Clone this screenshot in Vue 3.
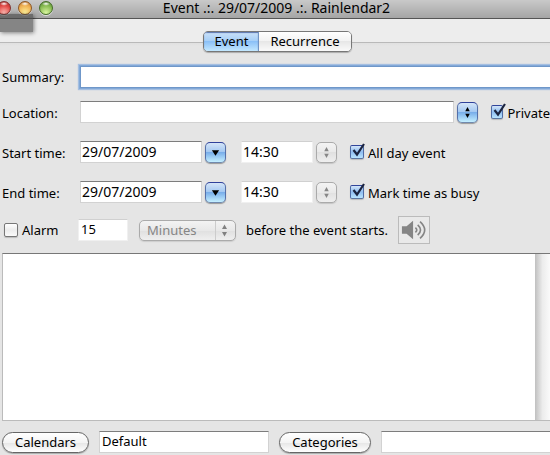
<script setup>
import { ref } from 'vue'

const tab = ref('Event')
const summary = ref('')
const location = ref('')
const isPrivate = ref(true)
const times = ref([
  { id: 'start', label: 'Start time:', date: '29/07/2009', time: '14:30', option: 'All day event', checked: true },
  { id: 'end', label: 'End time:', date: '29/07/2009', time: '14:30', option: 'Mark time as busy', checked: true }
])
const alarm = ref(false)
const alarmValue = ref('15')
const unit = ref('Minutes')
const notes = ref('')
const calendars = ref('Default')
const categories = ref('')
</script>

<template>
  <main class="window">
    <header class="titlebar">
      <div class="lights">
        <button class="light red" aria-label="Close"></button>
        <button class="light amber" aria-label="Minimize"></button>
        <button class="light green" aria-label="Zoom"></button>
      </div>
      <h1>Event .:. 29/07/2009 .:. Rainlendar2</h1>
    </header>
    <div class="shade"></div>

    <nav class="tabs">
      <div class="segments">
        <button v-for="name in ['Event', 'Recurrence']" :key="name" :class="{ active: tab === name }" @click="tab = name">{{ name }}</button>
      </div>
    </nav>

    <form class="form" @submit.prevent>
      <div class="row">
        <label class="caption" for="summary">Summary:</label>
        <input id="summary" v-model="summary" class="field grow focused" type="text">
      </div>

      <div class="row">
        <label class="caption" for="location">Location:</label>
        <input id="location" v-model="location" class="field grow" type="text">
        <button class="step blue" type="button" aria-label="Choose location">
          <svg viewBox="0 0 21 21"><path d="M10.500 4.500 13 9H8zM10.500 16.500 8 12h5z" /></svg>
        </button>
        <label class="check private">
          <input v-model="isPrivate" type="checkbox">
          <svg viewBox="0 0 18 18"><path d="M3.500 8 7 12.500 14 2" /></svg>
          <span>Private</span>
        </label>
      </div>

      <div v-for="t in times" :key="t.id" class="row">
        <label class="caption" :for="t.id">{{ t.label }}</label>
        <input :id="t.id" v-model="t.date" class="field date" type="text">
        <button class="step blue" type="button" aria-label="Open calendar">
          <svg viewBox="0 0 21 21"><path d="M6.500 8h8l-4 6z" /></svg>
        </button>
        <input v-model="t.time" class="field time faint" type="text" :aria-label="t.label">
        <button class="step" type="button" disabled aria-label="Adjust time">
          <svg viewBox="0 0 21 21"><path d="M10.500 4.500 13 9H8zM10.500 16.500 8 12h5z" /></svg>
        </button>
        <label class="check option">
          <input v-model="t.checked" type="checkbox">
          <svg viewBox="0 0 18 18"><path d="M3.500 8 7 12.500 14 2" /></svg>
          <span>{{ t.option }}</span>
        </label>
      </div>

      <div class="row alarm">
        <label class="check">
          <input v-model="alarm" type="checkbox">
          <svg viewBox="0 0 18 18"><path d="M3.500 8 7 12.500 14 2" /></svg>
          <span>Alarm</span>
        </label>
        <input v-model="alarmValue" class="field amount faint" type="text" aria-label="Alarm offset">
        <div class="unit">
          <select v-model="unit" disabled aria-label="Alarm unit">
            <option>Minutes</option>
            <option>Hours</option>
            <option>Days</option>
          </select>
          <svg viewBox="0 0 21 21"><path d="M10.500 4.500 13 9H8zM10.500 16.500 8 12h5z" /></svg>
        </div>
        <span class="before">before the event starts.</span>
        <button class="sound" type="button" aria-label="Alarm sound">
          <svg viewBox="0 0 32 28">
            <path class="cone" d="M3 10h5l7-6v20l-7-6H3z" />
            <path class="wave" d="M17.500 11.500q3 2.500 0 5M20 8.500q6 5.500 0 11M22.500 5q10 9 0 18" />
          </svg>
        </button>
      </div>

      <div class="notes">
        <textarea v-model="notes" aria-label="Description"></textarea>
        <div class="track"></div>
      </div>

      <div class="row bottom">
        <button class="pill calendars" type="button">Calendars</button>
        <input v-model="calendars" class="field names" type="text" aria-label="Calendars">
        <button class="pill categories" type="button">Categories</button>
        <input v-model="categories" class="field grow" type="text" aria-label="Categories">
      </div>
    </form>
  </main>
</template>

<style>
body {
  background: #e5e5e5;
  overflow: hidden;
}
</style>

<style scoped>
.window {
  position: relative;
  min-height: 100vh;
  overflow: hidden;
  background: #e5e5e5;
  color: #000;
  font: 13px/18px "Lucida Grande", "Noto Sans", sans-serif;
}
.window * {
  box-sizing: border-box;
}
button, input, select, textarea {
  margin: 0;
  font: inherit;
  color: inherit;
  outline: none;
}
.titlebar {
  display: flex;
  align-items: flex-start;
  height: 19px;
  background: linear-gradient(#c9c9c9, #a5a5a5);
  border-bottom: 1px solid #555;
}
.titlebar h1 {
  flex: 1;
  margin: 0;
  padding-right: 50px;
  font-size: 14px;
  font-weight: 400;
  line-height: 15px;
  text-align: center;
}
.lights {
  display: flex;
  gap: 7px;
  margin-left: -3px;
  padding-top: 1px;
}
.light {
  width: 14px;
  height: 14px;
  padding: 0;
  border: 1px solid;
  border-radius: 50%;
  box-shadow: 0 1px 0 #ddd;
}
.red {
  border-color: #83302d;
  background: radial-gradient(ellipse 4px 2px at 50% 15%, #fff, transparent), radial-gradient(circle at 50% 90%, #ffb9b2, #e04743 60%, #992c2c);
}
.amber {
  border-color: #8d5725;
  background: radial-gradient(ellipse 4px 2px at 50% 15%, #fff, transparent), radial-gradient(circle at 50% 90%, #fff29a, #efb052 60%, #b56d2e);
}
.green {
  border-color: #456c29;
  background: radial-gradient(ellipse 4px 2px at 50% 15%, #fff, transparent), radial-gradient(circle at 50% 90%, #d9f6a0, #86b94f 60%, #4b8030);
}
.shade {
  position: absolute;
  top: 14px;
  left: 0;
  width: 33px;
  height: 18px;
  background: rgba(70, 70, 70, .62);
  box-shadow: 1px 1px 4px rgba(0, 0, 0, .45);
}
.tabs {
  display: flex;
  justify-content: center;
  height: 46px;
  padding: 12px 0 0 5px;
  background: linear-gradient(#ededed 23px, #b9b9b9 23px 24px, #e0e0e0 24px, #e5e5e5 27px);
}
.segments {
  display: flex;
  height: 21px;
  border: 1px solid #777;
  border-radius: 5px;
  overflow: hidden;
  box-shadow: 0 1px 1px #aaa;
}
.segments button {
  padding: 0 11px;
  border: 0;
  background: linear-gradient(#fff, #f2f2f2 50%, #e7e7e7 50%, #fafafa);
  line-height: 19px;
}
.segments .active {
  padding: 0 10px;
  border-right: 1px solid #7194c4;
  background: linear-gradient(#cbe1f8, #a4cef7 50%, #8bc0f7 50%, #c3e8ff);
  box-shadow: inset 0 1px 1px #5974ad;
}
.form {
  padding-left: 2px;
}
.row {
  display: flex;
  align-items: center;
  height: 24px;
  margin-bottom: 16px;
}
.row:first-child {
  margin-bottom: 11px;
}
.caption {
  width: 78px;
  white-space: nowrap;
}
.row + .row .caption,
.row:not(.alarm) .check span {
  padding-top: 2px;
}
.field {
  height: 22px;
  min-width: 0;
  padding: 0 2px 2px;
  border: 1px solid #d2d2d2;
  border-top-color: #7d7d7d;
  border-radius: 0;
  background: #fff;
}
.grow {
  flex: 1;
}
.focused {
  margin-right: -4px;
  border-color: #6f97c9;
  box-shadow: 0 0 0 1px #83a9d8, 0 0 1px 2px #a5bfe1;
}
.faint {
  border-color: #d0d0d0 #f0f0f0 #f0f0f0;
}
.step {
  width: 21px;
  height: 21px;
  flex: none;
  padding: 0;
  margin-left: 3px;
  border: 1px solid #aaa;
  border-radius: 5px;
  background: linear-gradient(#f3f3f3, #e9e9e9 50%, #e0e0e0 50%, #efefef);
  box-shadow: 0 1px 1px #c5c5c5;
}
.step svg {
  display: block;
  width: 19px;
  height: 19px;
  fill: #868686;
}
.step.blue {
  border-color: #2f419b #5570a9 #7189ad;
  background: linear-gradient(#d5e5f8, #a2c7f1 48%, #79aeea 50%, #c4efff);
  box-shadow: 0 1px 1px #999;
}
.step.blue svg {
  fill: #000;
}
.check {
  position: relative;
  display: flex;
  align-items: center;
  gap: 4px;
  white-space: nowrap;
}
.check input {
  appearance: none;
  width: 14px;
  height: 14px;
  border: 1px solid #777;
  background: linear-gradient(#fff, #ececec 50%, #fafafa);
  box-shadow: 0 1px 1px #bbb;
  border-radius: 2px;
}
.check input:checked {
  border-color: #30459a #4f6ba4 #5b75a0;
  background: linear-gradient(#d3e5f8, #8fbdf0 50%, #b9e4ff);
}
.check svg {
  position: absolute;
  left: 0;
  top: 0;
  width: 18px;
  height: 18px;
  fill: none;
  stroke: #1b2440;
  stroke-width: 2.2;
  visibility: hidden;
  pointer-events: none;
}
.check input:checked + svg {
  visibility: visible;
}
.private {
  width: 59px;
  margin-left: 13px;
}
.date {
  width: 122px;
  padding-left: 1px;
  font-size: 14px;
}
.time {
  width: 72px;
  margin-left: 15px;
  padding-left: 1px;
  font-size: 14px;
}
.option {
  margin-left: 13px;
}
.alarm {
  height: 28px;
  margin: -4px 0 9px;
  padding-left: 2px;
}
.amount {
  width: 50px;
  margin-left: 17px;
}
.alarm .check {
  width: 57px;
}
.unit {
  position: relative;
  margin-left: 11px;
}
.unit select {
  display: block;
  appearance: none;
  width: 97px;
  height: 21px;
  padding: 0 7px;
  border: 1px solid #aaa;
  border-radius: 5px;
  background: linear-gradient(90deg, transparent 75px, #ccc 75px 76px, transparent 76px), linear-gradient(#f3f3f3, #e8e8e8 50%, #dfdfdf 50%, #efefef);
  box-shadow: 0 1px 1px #ccc;
  color: #858585;
  opacity: 1;
  line-height: 18px;
}
.unit svg {
  position: absolute;
  top: 0;
  right: 1px;
  width: 21px;
  height: 21px;
  fill: #808080;
  pointer-events: none;
}
.before {
  width: 152px;
  margin-left: 10px;
  white-space: nowrap;
}
.sound {
  width: 32px;
  height: 28px;
  padding: 0;
  border: 1px solid #bbb;
  background: #e9e9e9;
}
.sound svg {
  display: block;
  width: 30px;
  height: 26px;
}
.cone {
  fill: #858585;
}
.wave {
  fill: none;
  stroke: #858585;
  stroke-width: 1.8;
}
.notes {
  display: flex;
  height: 168px;
  border: 1px solid #bbb;
  border-top: 1px solid #777;
  border-right: 0;
  background: #fff;
}
.notes textarea {
  flex: 1;
  padding: 2px;
  border: 0;
  resize: none;
  background: transparent;
}
.track {
  width: 15px;
  background: linear-gradient(90deg, #c0c0c0, #ececec 50%, #fafafa);
}
.bottom {
  margin: 9px 0 0;
}
.bottom .field {
  margin-left: 10px;
}
.bottom .grow {
  margin-right: -2px;
}
.pill {
  height: 21px;
  padding: 0;
  border: 1px solid #666;
  border-radius: 11px;
  background: linear-gradient(#fff, #f4f4f4 50%, #e5e5e5 50%, #fff);
  box-shadow: 0 1px 1px #aaa;
  line-height: 18px;
}
.calendars {
  width: 87px;
}
.names {
  width: 170px;
}
.categories {
  width: 92px;
  margin-left: 10px;
}
</style>
